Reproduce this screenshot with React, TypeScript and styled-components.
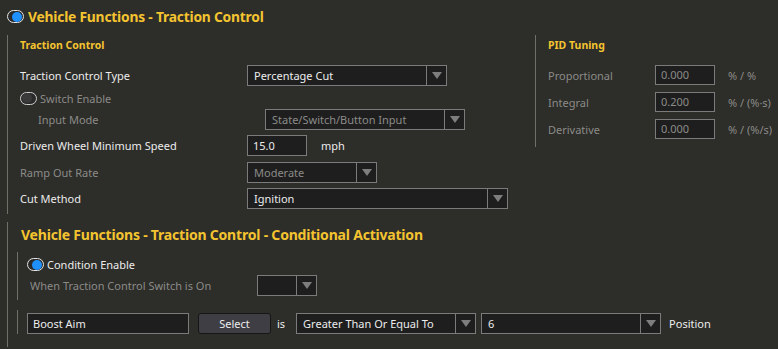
import React from 'react';
import styled, {createGlobalStyle} from 'styled-components';

const Global = createGlobalStyle`
  html, body {
    margin: 0;
    background: #2d2d29;
  }
  body {
    font-family: 'Noto Sans', 'Open Sans', sans-serif;
    font-size: 11px;
    color: #ececec;
  }
`;

const Page = styled.div`
  width: 778px;
  height: 349px;
  overflow: hidden;
  background: #2d2d29;
`;

const Header = styled.div`
  display: flex;
  align-items: center;
  gap: 4px;
  height: 33px;
  padding-left: 7px;
`;

const Title = styled.div<{$size?: number}>`
  font-weight: bold;
  font-size: ${p => p.$size || 14}px;
  color: #f4c430;
  letter-spacing: -0.2px;
  white-space: nowrap;
`;

const Toggle = styled.span<{$on?: boolean}>`
  box-sizing: border-box;
  display: inline-flex;
  align-items: center;
  justify-content: ${p => (p.$on ? 'flex-end' : 'flex-start')};
  width: 17px;
  height: 13px;
  padding: 0 1px;
  border: 1px solid ${p => (p.$on ? '#e6e6e6' : '#cfcfcf')};
  border-radius: 7px;
  background: #2a2a2a;
  flex: none;

  &::after {
    content: '';
    width: 10px;
    height: 10px;
    border-radius: 50%;
    background: ${p => (p.$on ? '#1e90ff' : '#3a3a3a')};
  }
`;

const Top = styled.div`
  display: flex;
  margin-top: 2px;
`;

const Group = styled.div<{$width?: number; $left?: number}>`
  border-left: 1px solid #707069;
  margin-left: ${p => p.$left ?? 7}px;
  padding: 2px 0 5px 12px;
  width: ${p => (p.$width ? `${p.$width}px` : 'auto')};
  box-sizing: border-box;
  display: flex;
  flex-direction: column;
`;

const SubTitle = styled.div`
  font-weight: bold;
  font-size: 10.5px;
  color: #f4c430;
  height: 16px;
  line-height: 16px;
  margin-bottom: 12px;
`;

const Row = styled.div<{$gap?: number; $indent?: number; $h?: number}>`
  display: flex;
  align-items: center;
  height: ${p => p.$h ?? 21}px;
  margin-top: ${p => p.$gap ?? 5}px;
  padding-left: ${p => p.$indent ?? 0}px;
`;

const Label = styled.span<{$dim?: boolean; $w?: number}>`
  width: ${p => p.$w ?? 227}px;
  flex: none;
  color: ${p => (p.$dim ? '#8b8b88' : '#ececec')};
  white-space: nowrap;
`;

const Unit = styled.span<{$dim?: boolean; $ml?: number}>`
  margin-left: ${p => p.$ml ?? 13}px;
  color: ${p => (p.$dim ? '#8b8b88' : '#ececec')};
  white-space: nowrap;
`;

const SelectBox = styled.div<{$w: number; $dim?: boolean}>`
  box-sizing: border-box;
  display: flex;
  width: ${p => p.$w}px;
  height: 21px;
  border: 1px solid #7b7b7b;
  background: #1e1e1e;
  color: ${p => (p.$dim ? '#8b8b88' : '#ececec')};
  flex: none;
`;

const SelectText = styled.span`
  flex: 1;
  padding-left: 6px;
  line-height: 19px;
  white-space: nowrap;
  overflow: hidden;
`;

const Arrow = styled.span`
  width: 19px;
  border-left: 1px solid #7b7b7b;
  display: flex;
  align-items: center;
  justify-content: center;

  &::after {
    content: '';
    border-left: 5px solid transparent;
    border-right: 5px solid transparent;
    border-top: 7px solid #7e7e7e;
  }
`;

const TextInput = styled.div<{$w: number; $dim?: boolean; $h?: number}>`
  box-sizing: border-box;
  width: ${p => p.$w}px;
  height: ${p => p.$h ?? 21}px;
  border: 1px solid #7b7b7b;
  background: #1e1e1e;
  color: ${p => (p.$dim ? '#8b8b88' : '#ececec')};
  padding-left: 5px;
  line-height: ${p => (p.$h ?? 21) - 2}px;
  flex: none;
`;

const Button = styled.div`
  box-sizing: border-box;
  width: 73px;
  height: 21px;
  margin-left: 9px;
  border: 1px solid #161616;
  border-radius: 3px;
  background: #3e3e44;
  color: #ececec;
  text-align: center;
  line-height: 19px;
`;

const Pair = styled.span`
  display: flex;
  gap: 5px;
  margin-left: 11px;
`;

const Lower = styled(Group)`
  margin-top: 8px;
  padding: 3px 0 0 9px;
  height: 125px;
`;

const Inner = styled.div<{$gap?: number}>`
  border-left: 1px solid #707069;
  padding-left: 9px;
  margin-top: ${p => p.$gap ?? 0}px;
  display: flex;
  flex-direction: column;
`;

const Select = ({w, text, dim}: {w: number; text: string; dim?: boolean}) => (
  <SelectBox $w={w} $dim={dim}>
    <SelectText>{text}</SelectText>
    <Arrow />
  </SelectBox>
);

const pid = [
  ['Proportional', '0.000', '% / %'],
  ['Integral', '0.200', '% / (%·s)'],
  ['Derivative', '0.000', '% / (%/s)'],
];

export default function App() {
  return (
    <Page>
      <Global />
      <Header>
        <Toggle $on />
        <Title $size={13.8}>Vehicle Functions - Traction Control</Title>
      </Header>
      <Top>
        <Group $width={528}>
          <SubTitle>Traction Control</SubTitle>
          <Row $gap={0}>
            <Label>Traction Control Type</Label>
            <Select w={200} text="Percentage Cut" />
          </Row>
          <Row $gap={3} $h={18} $indent={-3}>
            <Toggle />
            <Label $dim $w={200} style={{marginLeft: 3}}>Switch Enable</Label>
          </Row>
          <Row $gap={2} $indent={18}>
            <Label $dim>Input Mode</Label>
            <Select w={200} text="State/Switch/Button Input" dim />
          </Row>
          <Row>
            <Label>Driven Wheel Minimum Speed</Label>
            <TextInput $w={60}>15.0</TextInput>
            <Unit $ml={14}>mph</Unit>
          </Row>
          <Row $gap={6}>
            <Label $dim>Ramp Out Rate</Label>
            <Select w={130} text="Moderate" dim />
          </Row>
          <Row>
            <Label>Cut Method</Label>
            <Select w={261} text="Ignition" />
          </Row>
        </Group>
        <Group $left={0} style={{paddingBottom: 0, height: 112}}>
          <SubTitle>PID Tuning</SubTitle>
          {pid.map(([l, v, u], i) => (
            <Row key={l} $gap={i ? 7 : 0} $h={20}>
              <Label $dim $w={107}>{l}</Label>
              <TextInput $w={60} $h={20} $dim>{v}</TextInput>
              <Unit $dim>{u}</Unit>
            </Row>
          ))}
        </Group>
      </Top>
      <Lower>
        <Title style={{height: 19, lineHeight: '19px', marginLeft: 4}}>
          Vehicle Functions - Traction Control - Conditional Activation
        </Title>
        <Inner $gap={8}>
          <Row $gap={5} $h={15}>
            <Toggle $on />
            <Unit $ml={3}>Condition Enable</Unit>
          </Row>
          <Row $gap={3} $indent={3} style={{marginBottom: 4}}>
            <Label $dim>When Traction Control Switch is On</Label>
            <Select w={60} text="" />
          </Row>
        </Inner>
        <Inner $gap={10}>
          <Row $gap={3}>
            <TextInput $w={162}>Boost Aim</TextInput>
            <Button>Select</Button>
            <Unit $ml={6}>is</Unit>
            <Pair>
              <Select w={180} text="Greater Than Or Equal To" />
              <Select w={180} text="6" />
            </Pair>
            <Unit $ml={8}>Position</Unit>
          </Row>
        </Inner>
      </Lower>
    </Page>
  );
}
